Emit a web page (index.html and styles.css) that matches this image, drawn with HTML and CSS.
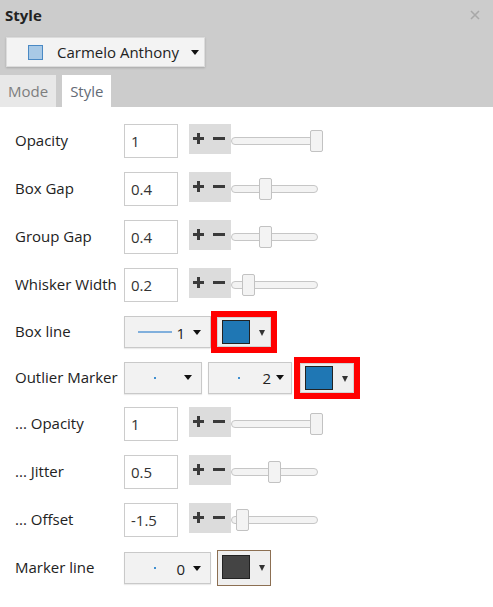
FILE: index.html
```html
<!DOCTYPE html>
<html>
<head>
<meta charset="utf-8">
<link rel="stylesheet" href="styles.css">
</head>
<body>
<div class="panel">
  <div class="head">
    <div class="titlebar">
      <span class="title">Style</span>
      <svg class="close" width="10" height="10" viewBox="0 0 10 10"><path d="M1 1L9 9M9 1L1 9" stroke="#a8a8a8" stroke-width="1.6"/></svg>
    </div>
    <div class="picker-wrap">
      <div class="picker">
        <span class="trace-icon"></span>
        <span class="picker-text">Carmelo Anthony</span>
        <span class="caret"></span>
      </div>
    </div>
    <div class="tabs">
      <div class="tab">Mode</div>
      <div class="tab active">Style</div>
    </div>
  </div>

  <div class="body">
    <div class="row">
      <div class="label">Opacity</div>
      <div class="num">1</div>
      <div class="stepper"><span class="plus"></span><span class="minus"></span></div>
      <div class="track"><span class="handle" style="left: 78px"></span></div>
    </div>
    <div class="row">
      <div class="label">Box Gap</div>
      <div class="num">0.4</div>
      <div class="stepper"><span class="plus"></span><span class="minus"></span></div>
      <div class="track"><span class="handle" style="left: 27px"></span></div>
    </div>
    <div class="row">
      <div class="label">Group Gap</div>
      <div class="num">0.4</div>
      <div class="stepper"><span class="plus"></span><span class="minus"></span></div>
      <div class="track"><span class="handle" style="left: 27px"></span></div>
    </div>
    <div class="row">
      <div class="label">Whisker Width</div>
      <div class="num">0.2</div>
      <div class="stepper"><span class="plus"></span><span class="minus"></span></div>
      <div class="track"><span class="handle" style="left: 10px"></span></div>
    </div>
    <div class="row row-boxline">
      <div class="label">Box line</div>
      <div class="sel sel-wide">
        <span class="glyph"><span class="line"></span></span>
        <span class="val">1</span>
        <span class="caret"></span>
      </div>
      <div class="color-btn flagged"><span class="swatch blue"></span><span class="mini-caret"></span></div>
    </div>
    <div class="row row-outlier">
      <div class="label">Outlier Marker</div>
      <div class="sel sel-short">
        <span class="glyph"><span class="dot"></span></span>
        <span class="caret"></span>
      </div>
      <div class="sel sel-mid">
        <span class="glyph"><span class="dot"></span></span>
        <span class="val">2</span>
        <span class="caret"></span>
      </div>
      <div class="color-btn flagged far"><span class="swatch blue"></span><span class="mini-caret"></span></div>
    </div>
    <div class="row">
      <div class="label">... Opacity</div>
      <div class="num">1</div>
      <div class="stepper"><span class="plus"></span><span class="minus"></span></div>
      <div class="track"><span class="handle" style="left: 78px"></span></div>
    </div>
    <div class="row">
      <div class="label">... Jitter</div>
      <div class="num">0.5</div>
      <div class="stepper"><span class="plus"></span><span class="minus"></span></div>
      <div class="track"><span class="handle" style="left: 35.5px"></span></div>
    </div>
    <div class="row">
      <div class="label">... Offset</div>
      <div class="num">-1.5</div>
      <div class="stepper"><span class="plus"></span><span class="minus"></span></div>
      <div class="track"><span class="handle" style="left: 3.6px"></span></div>
    </div>
    <div class="row">
      <div class="label">Marker line</div>
      <div class="sel sel-wide">
        <span class="glyph"><span class="dot"></span></span>
        <span class="val">0</span>
        <span class="caret"></span>
      </div>
      <div class="color-btn dark-btn"><span class="swatch dark"></span><span class="mini-caret"></span></div>
    </div>
  </div>
</div>
</body>
</html>
```

FILE: styles.css
```css
* { box-sizing: border-box; }
html, body {
  margin: 0;
  padding: 0;
  background: #fff;
}
body {
  font-family: "Open Sans", "DejaVu Sans", sans-serif;
  font-size: 15px;
  color: #222;
}
.panel {
  width: 493px;
  height: 607px;
  background: #fff;
}
.head {
  background: #cccccc;
  height: 107px;
  display: flex;
  flex-direction: column;
}
.titlebar {
  height: 30px;
  display: flex;
  align-items: center;
  justify-content: space-between;
  padding: 0 13px 0 5px;
}
.title {
  font-weight: 700;
  font-size: 15px;
  color: #222;
  line-height: 30px;
}
.close { display: block; margin-top: -1px; }
.picker-wrap {
  padding-left: 6px;
  margin-top: 7px;
}
.picker {
  width: 199px;
  height: 30px;
  background: #f3f3f3;
  border: 1px solid #dcdcdc;
  box-shadow: 0 1px 2px rgba(0,0,0,0.18);
  display: flex;
  align-items: center;
  padding-left: 21px;
}
.trace-icon {
  width: 15px;
  height: 15px;
  background: #a8c9e6;
  border: 1.5px solid #4a89c4;
}
.picker-text {
  margin-left: 14px;
  color: #222;
  font-size: 15px;
}
.picker .caret { margin-left: 12px; }
.caret {
  width: 0;
  height: 0;
  border-left: 4px solid transparent;
  border-right: 4px solid transparent;
  border-top: 5px solid #111;
  flex: none;
}
.tabs {
  margin-top: 8px;
  display: flex;
  gap: 6px;
  height: 32px;
}
.tab {
  height: 32px;
  line-height: 32px;
  padding: 0 8px;
  color: #7e7e7e;
  background: #e8e8e8;
  font-size: 15px;
}
.tab.active {
  background: #fff;
  color: #646b76;
}
.body {
  padding: 10px 0 0 15px;
}
.row {
  display: flex;
  align-items: center;
  height: 48px;
}
.row-boxline { height: 46px; }
.row-outlier { height: 45px; }
.label {
  width: 109px;
  flex: none;
  color: #222;
  font-size: 15px;
  margin-top: -2px;
}
.num {
  width: 54px;
  height: 34px;
  border: 1px solid #cccccc;
  padding-left: 6px;
  line-height: 33px;
  font-size: 15px;
  color: #333;
  flex: none;
}
.stepper {
  width: 42px;
  height: 30px;
  margin-left: 11px;
  margin-top: -5px;
  background: #dcdcdc;
  position: relative;
  flex: none;
}
.plus, .minus {
  position: absolute;
  background: #3a3a3a;
}
.plus {
  left: 4px;
  top: 13px;
  width: 11px;
  height: 3px;
}
.plus::after {
  content: "";
  position: absolute;
  left: 4px;
  top: -4px;
  width: 3px;
  height: 11px;
  background: #3a3a3a;
}
.minus {
  left: 24px;
  top: 13px;
  width: 12px;
  height: 3px;
}
.track {
  width: 87px;
  height: 8px;
  border: 1px solid #c6c6c6;
  border-radius: 4px;
  background: #f3f3f3;
  position: relative;
  flex: none;
}
.handle {
  position: absolute;
  top: -8px;
  width: 13px;
  height: 22px;
  background: #f3f3f3;
  border: 1px solid #c2c2c2;
  border-radius: 2px;
}
.sel {
  height: 32px;
  background: #f2f2f2;
  border: 1px solid #c9c9c9;
  box-shadow: 0 1px 1px rgba(0,0,0,0.08);
  display: flex;
  align-items: center;
  padding-left: 12px;
  padding-right: 9px;
  flex: none;
}
.sel-wide { width: 87px; }
.sel-short { width: 78px; padding-right: 9px; }
.sel-mid { width: 84px; margin-left: 6px; padding-right: 7px; }
.glyph {
  width: 36px;
  display: flex;
  justify-content: center;
  align-items: center;
  height: 10px;
  flex: none;
}
.line {
  width: 34px;
  height: 2px;
  background: #80afdc;
}
.dot {
  width: 2px;
  height: 2px;
  background: #3f8fd0;
}
.val {
  margin-left: auto;
  font-size: 15px;
  color: #222;
  margin-right: 8px;
  line-height: 1;
  margin-top: 2px;
}
.sel-short .caret { margin-left: auto; }
.sel-mid .val { margin-right: 5px; }
.color-btn {
  width: 54px;
  height: 30px;
  margin-left: 6px;
  background: #efefef;
  border: 1px solid #d2d2d2;
  display: flex;
  align-items: flex-start;
  padding: 2px 0 0 4px;
  flex: none;
}
.color-btn.flagged {
  outline: 6px solid #ff0000;
}
.color-btn.far { margin-left: 8px; }
.color-btn.dark-btn {
  height: 36px;
  border-color: #8c6f52;
  padding-top: 4px;
}
.swatch {
  width: 28px;
  height: 24px;
  border: 1px solid #222;
}
.swatch.blue { background: #1f77b4; }
.swatch.dark { background: #444; }
.mini-caret {
  margin-left: 9px;
  margin-top: 10px;
  width: 0;
  height: 0;
  border-left: 3px solid transparent;
  border-right: 3px solid transparent;
  border-top: 6px solid #333;
}
```
